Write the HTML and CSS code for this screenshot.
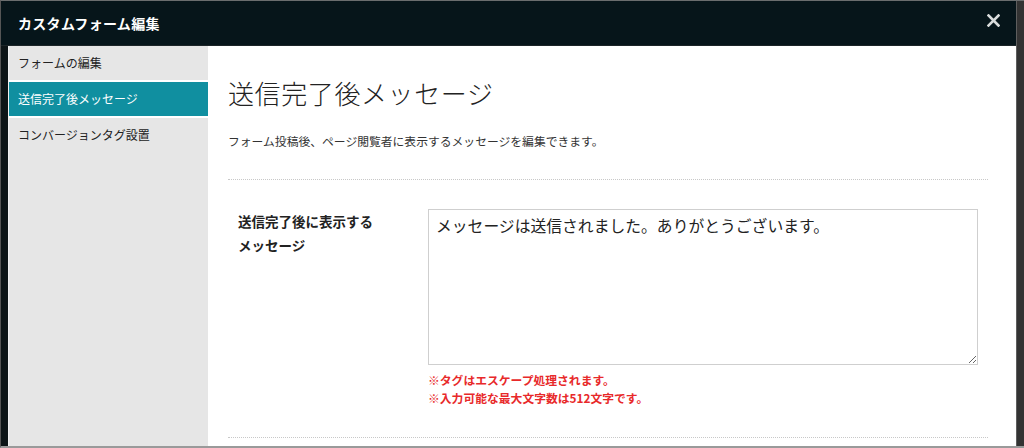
FILE: index.html
```html
<!DOCTYPE html>
<html lang="ja">
<head>
<meta charset="UTF-8">
<meta name="viewport" content="width=device-width, initial-scale=1.0">
<title>カスタムフォーム編集</title>
<link rel="stylesheet" href="styles.css">
</head>
<body>
<div class="screen">
    <div class="modal">
        <div class="modal-header">
            <div class="modal-title">カスタムフォーム編集</div>
            <button class="close-button" aria-label="閉じる">
                <svg width="13" height="13" viewBox="0 0 13 13">
                    <path d="M1.5 1.5 L11.5 11.5 M11.5 1.5 L1.5 11.5" stroke="#d9dcdc" stroke-width="2.6" stroke-linecap="square"/>
                </svg>
            </button>
        </div>
        <div class="modal-body">
            <div class="sidebar">
                <div class="menu-item">フォームの編集</div>
                <div class="menu-item active">送信完了後メッセージ</div>
                <div class="menu-item">コンバージョンタグ設置</div>
            </div>
            <div class="main">
                <h1 class="page-title">送信完了後メッセージ</h1>
                <p class="page-desc">フォーム投稿後、ページ閲覧者に表示するメッセージを編集できます。</p>
                <div class="form-row">
                    <div class="form-label">送信完了後に表示する<br>メッセージ</div>
                    <div class="form-field">
                        <textarea class="message-input">メッセージは送信されました。ありがとうございます。</textarea>
                        <div class="note">※タグはエスケープ処理されます。</div>
                        <div class="note">※入力可能な最大文字数は512文字です。</div>
                    </div>
                </div>
            </div>
        </div>
    </div>
    <div class="scroll-edge"></div>
</div>
</body>
</html>
```

FILE: styles.css
```css
html, body {
    margin: 0;
    padding: 0;
}

body {
    width: 1024px;
    height: 448px;
    overflow: hidden;
    font-family: "Noto Sans CJK JP", "Noto Sans", sans-serif;
    color: #222;
}

.screen {
    display: flex;
    height: 448px;
    box-sizing: border-box;
    border-top: 1px solid #6a6d6e;
    border-bottom: 2px solid #9a9a9a;
    border-left: 1px solid #555;
    background: #0d1517;
}

.modal {
    display: flex;
    flex-direction: column;
    width: 1008px;
    margin-left: 7px;
    background: #fff;
}

.modal-header {
    display: flex;
    align-items: center;
    justify-content: space-between;
    height: 44px;
    margin-left: -7px;
    padding: 0 16px 0 17px;
    background: #06151a;
    border-bottom: 1px solid #1c2528;
}

.modal-title {
    color: #fff;
    font-size: 14px;
    font-weight: bold;
    letter-spacing: 0.3px;
}

.close-button {
    display: flex;
    padding: 0;
    border: none;
    background: none;
    cursor: pointer;
    margin-top: -6px;
}

.modal-body {
    display: flex;
    flex: 1;
    min-height: 0;
}

.sidebar {
    width: 200px;
    background: #e6e6e6;
    border-left: 1px solid #f2f2f2;
}

.menu-item {
    height: 34px;
    line-height: 34px;
    padding-left: 9px;
    font-size: 12px;
    color: #222;
    border-bottom: 2px solid #fff;
}

.menu-item:last-child {
    border-bottom: none;
}

.menu-item.active {
    background: #108fa0;
    color: #fff;
}

.main {
    flex: 1;
    padding: 0 28px 0 20px;
}

.page-title {
    margin: 29px 0 0;
    font-size: 26px;
    font-weight: 300;
    line-height: 36px;
    letter-spacing: 0.6px;
    color: #222;
}

.page-desc {
    margin: 20px 0 0;
    font-size: 11.8px;
    line-height: 20px;
    color: #333;
    padding-bottom: 28px;
    border-bottom: 1px dotted #c8c8c8;
}

.form-row {
    display: flex;
    padding: 29px 10px 30px;
    border-bottom: 1px dotted #c8c8c8;
}

.form-label {
    width: 190px;
    font-size: 13.5px;
    font-weight: bold;
    line-height: 24px;
    color: #222;
}

.form-field {
    flex: 1;
}

.message-input {
    display: block;
    width: 550px;
    height: 156px;
    box-sizing: border-box;
    margin: 0;
    padding: 5px 7px;
    border: 1px solid #cfcfcf;
    font-family: inherit;
    font-size: 15.8px;
    line-height: 22px;
    color: #222;
    resize: vertical;
}

.note {
    font-size: 11.8px;
    font-weight: bold;
    line-height: 18px;
    color: #e8292a;
}

.note:first-of-type {
    margin-top: 6px;
}

.scroll-edge {
    width: 8px;
    background: #333;
    border-left: 1px solid #5e5e5e;
    box-sizing: border-box;
}
```
